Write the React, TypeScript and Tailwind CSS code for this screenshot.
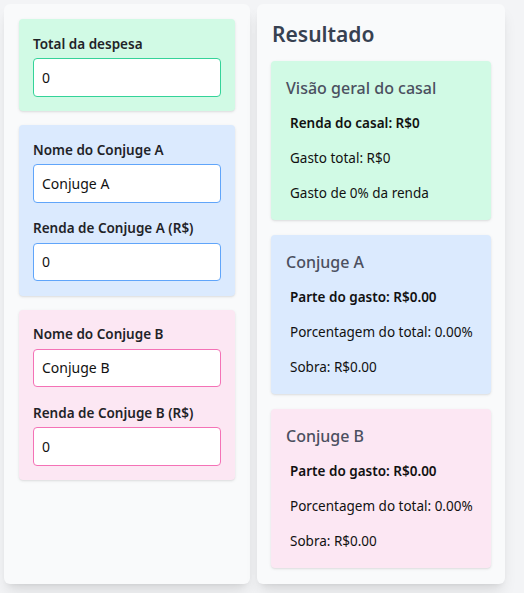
import React from "react";

function Field({ label, value, border }: { label: string; value: string; border: string }) {
  return (
    <div>
      <label className="block text-[13.5px] leading-[20px] font-semibold text-[#1f2328] mb-[4.5px]">{label}</label>
      <input
        readOnly
        value={value}
        className={`block w-full h-[38.5px] rounded-[4px] border bg-white px-[8px] text-[14px] text-[#111] outline-none ${border}`}
      />
    </div>
  );
}

function ResultCard({ title, lines, bg }: { title: string; lines: { t: string; b?: boolean }[]; bg: string }) {
  return (
    <div className={`rounded-[4px] shadow-sm px-[15px] pt-[15px] pb-[17px] ${bg}`}>
      <h3 className="text-[16px] leading-[24px] font-medium text-[#4b5060]">{title}</h3>
      <div className="mt-[13px] flex flex-col gap-[15px] pl-[4px]">
        {lines.map((l, i) => (
          <p
            key={i}
            className={`whitespace-nowrap text-[13.5px] leading-[20px] text-[#111] ${l.b ? "font-semibold" : ""}`}
          >
            {l.t}
          </p>
        ))}
      </div>
    </div>
  );
}

export default function App() {
  return (
    <div
      className="min-h-[593px] w-[524px] bg-[#f3f4f6] p-[4px]"
      style={{ fontFamily: '"Noto Sans", "Open Sans", sans-serif' }}
    >
      <div className="flex gap-[7px] w-[501px]">
        <div className="w-[246px] rounded-[6px] bg-[#f9fafb] shadow-lg p-[15px] flex flex-col gap-[14px]">
          <div className="rounded-[4px] bg-[#d1fae5] shadow-sm px-[14px] pt-[14.5px] pb-[14.5px]">
            <Field label="Total da despesa" value="0" border="border-[#34d399]" />
          </div>
          <div className="rounded-[4px] bg-[#dbeafe] shadow-sm px-[14px] pt-[14.5px] pb-[14.5px] flex flex-col gap-[15.5px]">
            <Field label="Nome do Conjuge A" value="Conjuge A" border="border-[#60a5fa]" />
            <Field label="Renda de Conjuge A (R$)" value="0" border="border-[#60a5fa]" />
          </div>
          <div className="rounded-[4px] bg-[#fce7f3] shadow-sm px-[14px] pt-[14.5px] pb-[14.5px] flex flex-col gap-[15.5px]">
            <Field label="Nome do Conjuge B" value="Conjuge B" border="border-[#f472b6]" />
            <Field label="Renda de Conjuge B (R$)" value="0" border="border-[#f472b6]" />
          </div>
        </div>
        <div className="w-[248px] rounded-[6px] bg-[#f9fafb] shadow-lg px-[14px] pt-[14px] pb-[16px] flex flex-col">
          <h2 className="text-[21px] leading-[32px] font-semibold text-[#374151] pl-[1px]">Resultado</h2>
          <div className="mt-[11px] flex flex-col gap-[15px]">
            <ResultCard
              title="Visão geral do casal"
              bg="bg-[#d1fae5]"
              lines={[{ t: "Renda do casal: R$0", b: true }, { t: "Gasto total: R$0" }, { t: "Gasto de 0% da renda" }]}
            />
            <ResultCard
              title="Conjuge A"
              bg="bg-[#dbeafe]"
              lines={[
                { t: "Parte do gasto: R$0.00", b: true },
                { t: "Porcentagem do total: 0.00%" },
                { t: "Sobra: R$0.00" },
              ]}
            />
            <ResultCard
              title="Conjuge B"
              bg="bg-[#fce7f3]"
              lines={[
                { t: "Parte do gasto: R$0.00", b: true },
                { t: "Porcentagem do total: 0.00%" },
                { t: "Sobra: R$0.00" },
              ]}
            />
          </div>
        </div>
      </div>
    </div>
  );
}
